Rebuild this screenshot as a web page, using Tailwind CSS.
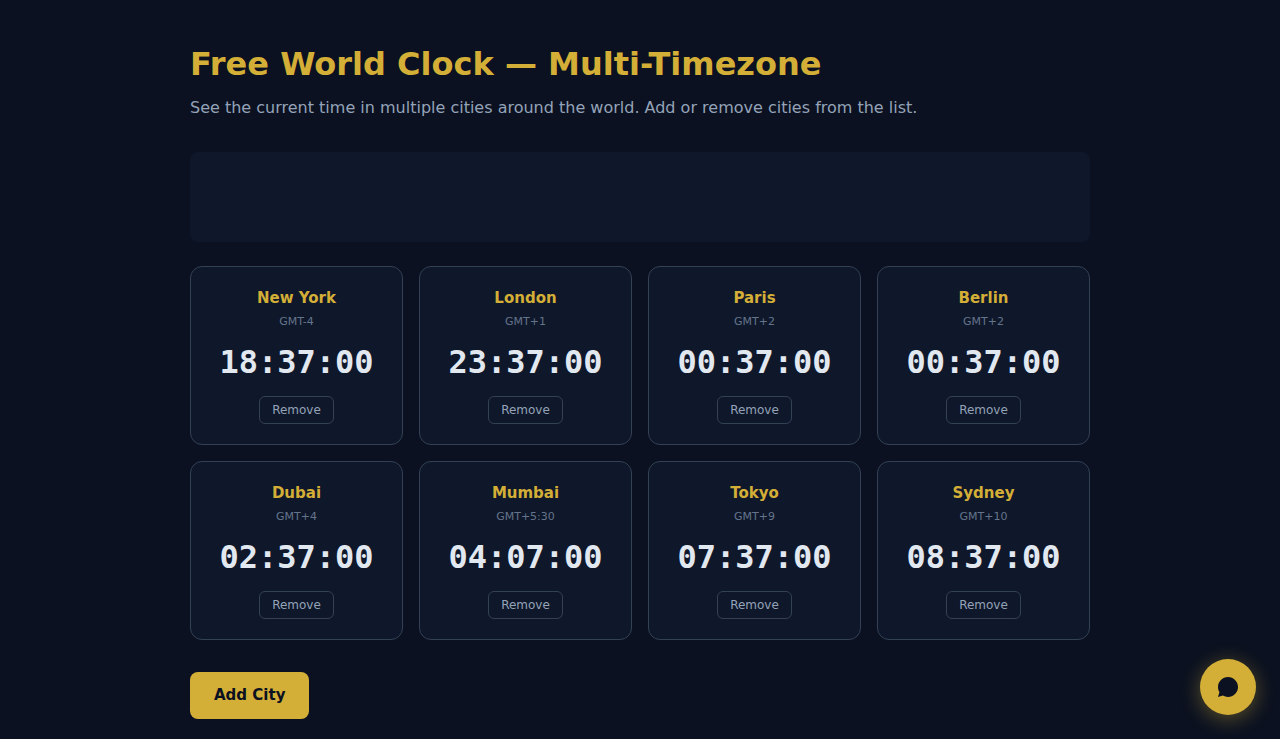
<!DOCTYPE html>
<html lang="en">

<head>
    <meta charset="UTF-8">
    <meta name="viewport" content="width=device-width, initial-scale=1.0">
    <title>Free World Clock — Multi-Timezone</title>
    <script src="https://cdn.jsdelivr.net/npm/@tailwindcss/browser@4"></script>
</head>

<body class="min-h-screen bg-[#0b1120] font-['DejaVu_Sans',sans-serif] text-[#e2e8f0]">
    <main class="max-w-[940px] mx-auto px-5 pt-10 pb-5">
        <!-- Heading -->
        <h1 class="text-[32px] leading-[48px] font-bold text-[#d4af37]">Free World Clock — Multi-Timezone</h1>
        <p class="mt-2 mb-8 text-base leading-6 text-[#94a3b8]">See the current time in multiple cities around the world. Add or remove cities from the list.</p>

        <!-- Banner slot -->
        <div class="h-[90px] mb-6 rounded-lg bg-[#0f172a]"></div>

        <!-- Clocks -->
        <div class="grid grid-cols-1 sm:grid-cols-2 md:grid-cols-4 gap-4" id="clocks">
            <!-- Clock cards are injected here -->
        </div>

        <button type="button" class="mt-8 px-6 h-[47px] rounded-lg bg-[#d4af37] text-[15px] font-bold text-[#0b1120] cursor-pointer">Add City</button>
    </main>

    <!-- Chat button -->
    <button type="button" aria-label="Open chat" class="fixed right-6 bottom-6 size-14 rounded-full bg-[#d4af37] text-[#0b1120] flex items-center justify-center shadow-[0_4px_20px_rgba(212,175,55,0.4)] cursor-pointer">
        <svg class="size-6" viewBox="0 0 24 24" fill="currentColor" aria-hidden="true">
            <path d="M12 2C6.48 2 2 6.48 2 12c0 1.89.52 3.66 1.44 5.17L2 22l4.83-1.44A9.96 9.96 0 0 0 12 22c5.52 0 10-4.48 10-10S17.52 2 12 2z" />
        </svg>
    </button>

    <script>
        const cities = [
            { name: "New York", zone: "GMT-4", time: "18:37:00" },
            { name: "London", zone: "GMT+1", time: "23:37:00" },
            { name: "Paris", zone: "GMT+2", time: "00:37:00" },
            { name: "Berlin", zone: "GMT+2", time: "00:37:00" },
            { name: "Dubai", zone: "GMT+4", time: "02:37:00" },
            { name: "Mumbai", zone: "GMT+5:30", time: "04:07:00" },
            { name: "Tokyo", zone: "GMT+9", time: "07:37:00" },
            { name: "Sydney", zone: "GMT+10", time: "08:37:00" }
        ];

        const clocks = document.getElementById("clocks");

        function renderClocks() {
            clocks.innerHTML = cities.map((city, index) => `
                <div class="rounded-xl border border-[#334155] bg-[#0f172a] p-5 text-center">
                    <h2 class="text-[15px] leading-[22px] font-bold text-[#d4af37]">${city.name}</h2>
                    <p class="mt-1 text-[11px] leading-[18px] text-[#64748b]">${city.zone}</p>
                    <div class="mt-2 mb-2.5 font-['DejaVu_Sans_Mono',monospace] text-[32px] leading-[47px] font-bold">${city.time}</div>
                    <button type="button" class="h-7 px-3 rounded-md border border-[#334155] text-xs text-[#94a3b8] align-top cursor-pointer" data-index="${index}">Remove</button>
                </div>`).join("");
        }

        clocks.addEventListener("click", (e) => {
            if (e.target.tagName === "BUTTON") {
                cities.splice(Number(e.target.dataset.index), 1);
                renderClocks();
            }
        });

        renderClocks();
    </script>
</body>

</html>
